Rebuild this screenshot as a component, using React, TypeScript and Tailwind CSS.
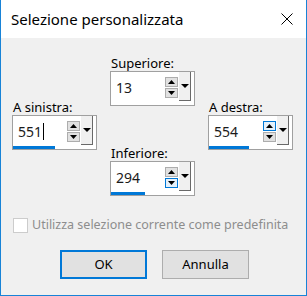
import React from 'react'

const font = { fontFamily: '"Noto Sans", "Open Sans", sans-serif' }

function Arrow({ up, size = 7 }: { up?: boolean; size?: number }) {
  const h = Math.ceil(size / 2)
  return (
    <svg width={size} height={h} viewBox={`0 0 ${size} ${h}`}>
      {up ? (
        <polygon points={`0,${h} ${size},${h} ${size / 2},0`} fill="#000" />
      ) : (
        <polygon points={`0,0 ${size},0 ${size / 2},${h}`} fill="#000" />
      )}
    </svg>
  )
}

interface SpinProps {
  value: string
  bar: number
  hot?: 'up' | 'down'
  caret?: boolean
}

function Spin({ value, bar, hot, caret }: SpinProps) {
  const btn = 'flex h-[10px] w-[13px] items-center justify-center border'
  const cold = 'border-[#adadad] bg-[#e1e1e1]'
  const warm = 'border-[#0078d7] bg-[#e5f1fb]'
  return (
    <div className="flex h-[35px] w-[85px] flex-col border border-[#a0a0a0] bg-white">
      <div className="flex h-[30px] items-center">
        <div className="flex flex-1 items-center pl-[5px] text-[14px] text-[#1b1b1b]">
          {value}
          {caret && <span className="ml-[1px] inline-block h-[17px] w-[1px] bg-black" />}
        </div>
        <div className="flex flex-col gap-[1px] pt-[1px]">
          <div className={`${btn} ${hot === 'up' ? warm : cold}`}>
            <Arrow up />
          </div>
          <div className={`${btn} ${hot === 'down' ? warm : cold}`}>
            <Arrow />
          </div>
        </div>
        <div className="ml-[1px] mr-[3px] flex h-[29px] w-[12px] items-center justify-center self-start border-b border-r border-b-[#696969] border-r-[#696969] bg-[#f0f0f0]">
          <Arrow size={8} />
        </div>
      </div>
      <div className="h-[3px]">
        <div className="h-full bg-[#0078d7]" style={{ width: bar }} />
      </div>
    </div>
  )
}

function Field({ label, ...rest }: { label: string } & SpinProps) {
  return (
    <div className="flex flex-col">
      <div className="h-[16px] pl-[1px] text-[13px] leading-[16px] text-black">{label}</div>
      <Spin {...rest} />
    </div>
  )
}

export default function App() {
  return (
    <div
      className="flex h-[296px] w-[307px] flex-col border-x border-b border-[#1883d7] bg-[#f0f0f0]"
      style={font}
    >
      <div className="flex h-[38px] shrink-0 items-center justify-between bg-white pl-[10px] pr-[13px]">
        <span className="text-[15px] text-black">Selezione personalizzata</span>
        <svg width="12" height="12" viewBox="0 0 12 12">
          <path d="M0.5 0.5 L11.5 11.5 M11.5 0.5 L0.5 11.5" stroke="#000" strokeWidth="1" />
        </svg>
      </div>

      <div className="flex flex-1 flex-col">
        <div className="flex gap-[13px] pl-[11px]">
          <div className="pt-[61px]">
            <Field label="A sinistra:" value="551" bar={42} caret />
          </div>
          <div className="flex flex-col gap-[39px] pt-[17px]">
            <Field label="Superiore:" value="13" bar={0} />
            <Field label="Inferiore:" value="294" bar={34} hot="down" />
          </div>
          <div className="pt-[61px]">
            <Field label="A destra:" value="554" bar={40} hot="up" />
          </div>
        </div>

        <div className="mt-[20px] flex items-center gap-[4px] pl-[12px]">
          <div className="h-[15px] w-[15px] border border-[#cccccc] bg-white" />
          <span className="text-[12.5px] text-[#8d8d8d]">Utilizza selezione corrente come predefinita</span>
        </div>

        <div className="mt-[15px] flex gap-[15px] pl-[59px]">
          <button className="h-[29px] w-[87px] border-2 border-[#0078d7] bg-[#e1e1e1] text-[13px] text-black">
            OK
          </button>
          <button className="h-[29px] w-[87px] border border-[#adadad] bg-[#e1e1e1] text-[13px] text-black">
            Annulla
          </button>
        </div>
      </div>
    </div>
  )
}
